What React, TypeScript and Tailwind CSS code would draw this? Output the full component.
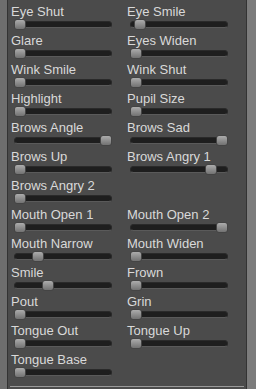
const sliders: [string, number][] = [
  ['Eye Shut', 0],
  ['Eye Smile', 0.05],
  ['Glare', 0],
  ['Eyes Widen', 0],
  ['Wink Smile', 0],
  ['Wink Shut', 0],
  ['Highlight', 0],
  ['Pupil Size', 0],
  ['Brows Angle', 1],
  ['Brows Sad', 1],
  ['Brows Up', 0],
  ['Brows Angry 1', 0.87],
  ['Brows Angry 2', 0],
  ['', -1],
  ['Mouth Open 1', 0],
  ['Mouth Open 2', 1],
  ['Mouth Narrow', 0.21],
  ['Mouth Widen', 0],
  ['Smile', 0.33],
  ['Frown', 0],
  ['Pout', 0],
  ['Grin', 0],
  ['Tongue Out', 0],
  ['Tongue Up', 0],
  ['Tongue Base', 0],
];

function Slider({ label, value }: { label: string; value: number }) {
  if (value < 0) return <div className="h-[29px]" />;
  return (
    <div className="h-[29px]">
      <div className="h-[14px] text-[13px] leading-[16px] text-[#d9d9d9] whitespace-nowrap">{label}</div>
      <div className="relative h-[15px] ml-[3px] w-[98px]">
        <div className="absolute left-0 right-0 top-[3px] h-[7px] rounded-full bg-[#1e1e1e] border border-[#2a2a2a] border-b-[#5a5a5a]" />
        <div
          className="absolute top-[1px] h-[11px] w-[12px] rounded-[3px] border border-[#444] bg-gradient-to-b from-[#acacac] to-[#727272]"
          style={{ left: Math.round(value * 86) }}
        />
      </div>
    </div>
  );
}

export default function App() {
  return (
    <div className="flex h-[389px] w-[256px] font-['Liberation_Sans',Arial,sans-serif] overflow-hidden">
      <div className="w-[7px] bg-[#6e6e6e]" />
      <div className="w-[240px] bg-[#4b4b4b] border-x border-[#333] flex flex-col">
        <div className="grid grid-cols-[116px_116px] pl-[3px] pt-[4px]">
          {sliders.map(([label, value], i) => (
            <Slider key={i} label={label} value={value} />
          ))}
        </div>
        <div className="mt-auto mb-[2px] mx-[2px] h-px bg-[#9a9a9a]" />
      </div>
      <div className="flex-1 bg-[#7c7c7c]" />
    </div>
  );
}
